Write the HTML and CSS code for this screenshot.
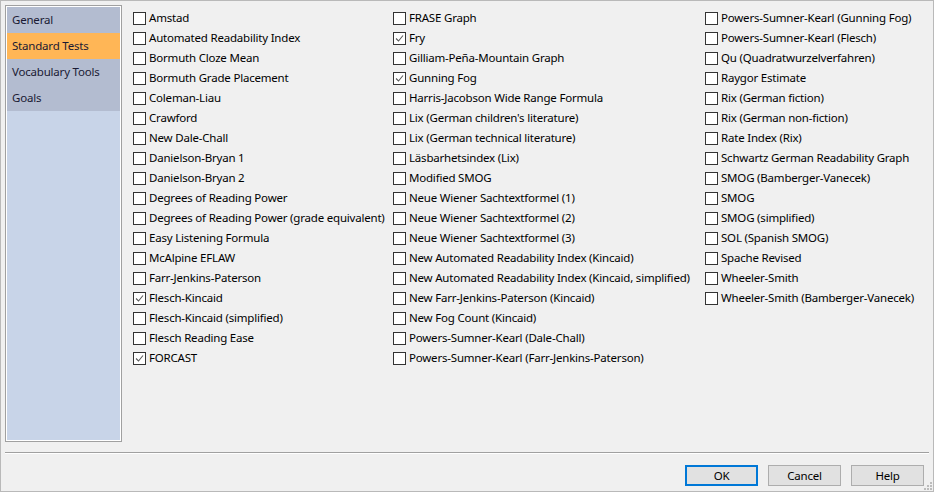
FILE: index.html
```html
<!DOCTYPE html>
<html>
<head>
<meta charset="utf-8">
<link rel="stylesheet" href="styles.css">
</head>
<body>
<div class="window">
  <div class="main">
    <div class="sidebar">
      <div class="nav-item">General</div>
      <div class="nav-item active">Standard Tests</div>
      <div class="nav-item">Vocabulary Tools</div>
      <div class="nav-item">Goals</div>
    </div>
    <div class="columns">
      <div class="col col1">
        <label class="row"><span class="cb"></span><span class="lbl">Amstad</span></label>
        <label class="row"><span class="cb"></span><span class="lbl">Automated Readability Index</span></label>
        <label class="row"><span class="cb"></span><span class="lbl">Bormuth Cloze Mean</span></label>
        <label class="row"><span class="cb"></span><span class="lbl">Bormuth Grade Placement</span></label>
        <label class="row"><span class="cb"></span><span class="lbl">Coleman-Liau</span></label>
        <label class="row"><span class="cb"></span><span class="lbl">Crawford</span></label>
        <label class="row"><span class="cb"></span><span class="lbl">New Dale-Chall</span></label>
        <label class="row"><span class="cb"></span><span class="lbl">Danielson-Bryan 1</span></label>
        <label class="row"><span class="cb"></span><span class="lbl">Danielson-Bryan 2</span></label>
        <label class="row"><span class="cb"></span><span class="lbl">Degrees of Reading Power</span></label>
        <label class="row"><span class="cb"></span><span class="lbl">Degrees of Reading Power (grade equivalent)</span></label>
        <label class="row"><span class="cb"></span><span class="lbl">Easy Listening Formula</span></label>
        <label class="row"><span class="cb"></span><span class="lbl">McAlpine EFLAW</span></label>
        <label class="row"><span class="cb"></span><span class="lbl">Farr-Jenkins-Paterson</span></label>
        <label class="row"><span class="cb checked"><svg viewBox="0 0 11 11" width="11" height="11"><polyline points="2,5.5 4.5,8 9,2.5" fill="none" stroke="#5a5a5a" stroke-width="1.1"/></svg></span><span class="lbl">Flesch-Kincaid</span></label>
        <label class="row"><span class="cb"></span><span class="lbl">Flesch-Kincaid (simplified)</span></label>
        <label class="row"><span class="cb"></span><span class="lbl">Flesch Reading Ease</span></label>
        <label class="row"><span class="cb checked"><svg viewBox="0 0 11 11" width="11" height="11"><polyline points="2,5.5 4.5,8 9,2.5" fill="none" stroke="#5a5a5a" stroke-width="1.1"/></svg></span><span class="lbl">FORCAST</span></label>
      </div>
      <div class="col col2">
        <label class="row"><span class="cb"></span><span class="lbl">FRASE Graph</span></label>
        <label class="row"><span class="cb checked"><svg viewBox="0 0 11 11" width="11" height="11"><polyline points="2,5.5 4.5,8 9,2.5" fill="none" stroke="#5a5a5a" stroke-width="1.1"/></svg></span><span class="lbl">Fry</span></label>
        <label class="row"><span class="cb"></span><span class="lbl">Gilliam-Peña-Mountain Graph</span></label>
        <label class="row"><span class="cb checked"><svg viewBox="0 0 11 11" width="11" height="11"><polyline points="2,5.5 4.5,8 9,2.5" fill="none" stroke="#5a5a5a" stroke-width="1.1"/></svg></span><span class="lbl">Gunning Fog</span></label>
        <label class="row"><span class="cb"></span><span class="lbl">Harris-Jacobson Wide Range Formula</span></label>
        <label class="row"><span class="cb"></span><span class="lbl">Lix (German children's literature)</span></label>
        <label class="row"><span class="cb"></span><span class="lbl">Lix (German technical literature)</span></label>
        <label class="row"><span class="cb"></span><span class="lbl">Läsbarhetsindex (Lix)</span></label>
        <label class="row"><span class="cb"></span><span class="lbl">Modified SMOG</span></label>
        <label class="row"><span class="cb"></span><span class="lbl">Neue Wiener Sachtextformel (1)</span></label>
        <label class="row"><span class="cb"></span><span class="lbl">Neue Wiener Sachtextformel (2)</span></label>
        <label class="row"><span class="cb"></span><span class="lbl">Neue Wiener Sachtextformel (3)</span></label>
        <label class="row"><span class="cb"></span><span class="lbl">New Automated Readability Index (Kincaid)</span></label>
        <label class="row"><span class="cb"></span><span class="lbl">New Automated Readability Index (Kincaid, simplified)</span></label>
        <label class="row"><span class="cb"></span><span class="lbl">New Farr-Jenkins-Paterson (Kincaid)</span></label>
        <label class="row"><span class="cb"></span><span class="lbl">New Fog Count (Kincaid)</span></label>
        <label class="row"><span class="cb"></span><span class="lbl">Powers-Sumner-Kearl (Dale-Chall)</span></label>
        <label class="row"><span class="cb"></span><span class="lbl">Powers-Sumner-Kearl (Farr-Jenkins-Paterson)</span></label>
      </div>
      <div class="col col3">
        <label class="row"><span class="cb"></span><span class="lbl">Powers-Sumner-Kearl (Gunning Fog)</span></label>
        <label class="row"><span class="cb"></span><span class="lbl">Powers-Sumner-Kearl (Flesch)</span></label>
        <label class="row"><span class="cb"></span><span class="lbl">Qu (Quadratwurzelverfahren)</span></label>
        <label class="row"><span class="cb"></span><span class="lbl">Raygor Estimate</span></label>
        <label class="row"><span class="cb"></span><span class="lbl">Rix (German fiction)</span></label>
        <label class="row"><span class="cb"></span><span class="lbl">Rix (German non-fiction)</span></label>
        <label class="row"><span class="cb"></span><span class="lbl">Rate Index (Rix)</span></label>
        <label class="row"><span class="cb"></span><span class="lbl">Schwartz German Readability Graph</span></label>
        <label class="row"><span class="cb"></span><span class="lbl">SMOG (Bamberger-Vanecek)</span></label>
        <label class="row"><span class="cb"></span><span class="lbl">SMOG</span></label>
        <label class="row"><span class="cb"></span><span class="lbl">SMOG (simplified)</span></label>
        <label class="row"><span class="cb"></span><span class="lbl">SOL (Spanish SMOG)</span></label>
        <label class="row"><span class="cb"></span><span class="lbl">Spache Revised</span></label>
        <label class="row"><span class="cb"></span><span class="lbl">Wheeler-Smith</span></label>
        <label class="row"><span class="cb"></span><span class="lbl">Wheeler-Smith (Bamberger-Vanecek)</span></label>
      </div>
    </div>
  </div>
  <div class="separator"></div>
  <div class="buttons">
    <button class="btn default">OK</button>
    <button class="btn">Cancel</button>
    <button class="btn">Help</button>
  </div>
  <div class="grip">
    <span class="dot d1"></span><span class="dot d2"></span><span class="dot d3"></span>
    <span class="dot d4"></span><span class="dot d5"></span><span class="dot d6"></span>
  </div>
</div>
</body>
</html>
```

FILE: styles.css
```css
* { box-sizing: border-box; }
html, body { margin: 0; padding: 0; }
body {
  font-family: "Noto Sans", "Open Sans", "Liberation Sans", sans-serif;
  font-size: 11.5px;
  letter-spacing: -0.2px;
  color: #000;
  background: #f0f0f0;
}
.window {
  position: relative;
  width: 934px;
  height: 492px;
  border: 1px solid #b9b9b9;
  background: #f0f0f0;
  padding: 4px 4px 0 4px;
  display: flex;
  flex-direction: column;
}
.main {
  display: flex;
  height: 437px;
}
.sidebar {
  width: 117px;
  height: 437px;
  border: 1px solid #a0a0a0;
  box-shadow: inset 0 0 0 1px #ffffff;
  background: #c8d4e8;
  padding: 1px;
  display: flex;
  flex-direction: column;
}
.nav-item {
  height: 26px;
  line-height: 26px;
  padding-left: 5px;
  background: #b3bcd0;
  color: #1a1a33;
  white-space: nowrap;
}
.nav-item.active {
  background: #ffb656;
}
.columns {
  display: flex;
  margin-left: 11px;
  padding-top: 3px;
}
.col {
  display: flex;
  flex-direction: column;
}
.col1 { width: 260px; }
.col2 { width: 312px; }
.col3 { flex: 1; }
.row {
  display: flex;
  align-items: flex-start;
  height: 20px;
}
.cb {
  width: 13px;
  height: 13px;
  margin-top: 4px;
  border: 1px solid #333333;
  background: #ffffff;
  flex: none;
  display: flex;
  align-items: center;
  justify-content: center;
}
.lbl {
  margin-left: 3px;
  line-height: 20px;
  white-space: nowrap;
}
.separator {
  margin-top: 10px;
  height: 2px;
  width: 924px;
  border-top: 1px solid #a0a0a0;
  border-bottom: 1px solid #ffffff;
}
.buttons {
  display: flex;
  justify-content: flex-end;
  gap: 10px;
  margin-top: 11px;
  padding-right: 5px;
}
.btn {
  width: 73px;
  height: 21px;
  background: #e1e1e1;
  border: 1px solid #adadad;
  font-family: "Noto Sans", "Open Sans", "Liberation Sans", sans-serif;
  font-size: 11.5px;
  letter-spacing: -0.2px;
  color: #000;
  padding: 0;
  line-height: 18px;
}
.btn.default {
  border: 2px solid #0078d7;
}
.grip {
  position: absolute;
  right: 1px;
  bottom: 1px;
  width: 10px;
  height: 10px;
}
.dot {
  position: absolute;
  width: 2px;
  height: 2px;
  background: #bcbcbc;
}
.d1 { right: 0; bottom: 0; }
.d2 { right: 3px; bottom: 0; }
.d3 { right: 6px; bottom: 0; }
.d4 { right: 0; bottom: 3px; }
.d5 { right: 3px; bottom: 3px; }
.d6 { right: 0; bottom: 6px; }
```
